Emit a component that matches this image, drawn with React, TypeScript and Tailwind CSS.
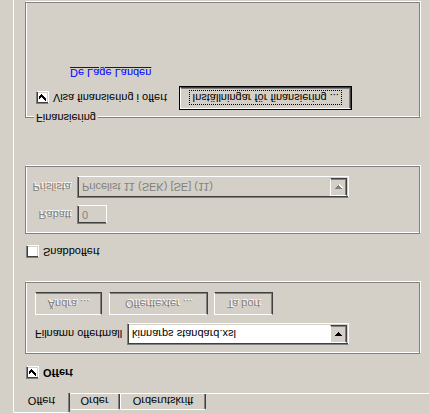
import React from "react";

const sunken =
  "border border-t-[#808080] border-l-[#808080] border-r-white border-b-white shadow-[inset_1px_1px_0_#404040,inset_-1px_-1px_0_#d4d0c8]";
const raised =
  "border border-t-white border-l-white border-r-[#404040] border-b-[#404040] shadow-[inset_-1px_-1px_0_#808080] bg-[#d4d0c8]";
const disabledText = "text-[#808080] [text-shadow:1px_1px_0_#fff]";

function Check() {
  return (
    <svg width="7" height="7" viewBox="0 0 7 7" className="block" shapeRendering="crispEdges">
      <rect x="6" y="0" width="1" height="3" fill="#000" />
      <rect x="5" y="1" width="1" height="3" fill="#000" />
      <rect x="4" y="2" width="1" height="3" fill="#000" />
      <rect x="3" y="3" width="1" height="3" fill="#000" />
      <rect x="2" y="4" width="1" height="3" fill="#000" />
      <rect x="1" y="3" width="1" height="3" fill="#000" />
      <rect x="0" y="2" width="1" height="3" fill="#000" />
    </svg>
  );
}

function CheckBox({ checked }: { checked?: boolean }) {
  return (
    <div className={`w-[13px] h-[13px] bg-white shrink-0 flex items-center justify-center ${sunken}`}>
      {checked && <Check />}
    </div>
  );
}

function Arrow({ disabled }: { disabled?: boolean }) {
  return (
    <svg width="8" height="5" viewBox="0 0 8 5" className="block" shapeRendering="crispEdges">
      {disabled && <path d="M1 1h7v1h-1v1h-1v1h-1v1h-1v-1h-1v-1h-1v-1h-1z" fill="#fff" />}
      <path d="M0 0h7v1h-1v1h-1v1h-1v1h-1v-1h-1v-1h-1v-1h-1z" fill={disabled ? "#808080" : "#000"} />
    </svg>
  );
}

function Select({ text, width, disabled }: { text: string; width: string; disabled?: boolean }) {
  return (
    <div
      className={`${width} h-[22px] flex items-center justify-between pl-[3px] pr-[1px] ${sunken} ${
        disabled ? "bg-[#d4d0c8] text-[#808080]" : "bg-white text-black"
      }`}
    >
      <span className="whitespace-nowrap pl-[1px]">{text}</span>
      <div className={`w-[17px] h-[18px] flex items-center justify-center ${raised}`}>
        <Arrow disabled={disabled} />
      </div>
    </div>
  );
}

function Button({ label, width, disabled }: { label: string; width: string; disabled?: boolean }) {
  return (
    <div className={`${width} h-[23px] flex items-center justify-center ${raised}`}>
      <span className={disabled ? disabledText : "text-black"}>{label}</span>
    </div>
  );
}

const group = "border border-[#808080] shadow-[inset_1px_1px_0_#fff,1px_1px_0_#fff]";

export default function App() {
  return (
    <div className="w-[429px] h-[414px] overflow-hidden bg-[#d4d0c8] [transform:scaleY(-1)] font-['Liberation_Sans',Arial,sans-serif] text-[11px] leading-[13px] text-black">
      {/* Tabs */}
      <div className="relative z-10 flex items-end h-[20px] pl-[13px]">
        <div className="w-[57px] h-[20px] -mb-px bg-[#d4d0c8] border-l border-t border-white border-r border-r-[#404040] shadow-[inset_-1px_0_0_#808080] rounded-t-[2px] flex justify-center pt-[5px]">
          Offert
        </div>
        <div className="w-[50px] h-[16px] border-t border-white border-r border-r-[#404040] shadow-[inset_-1px_0_0_#808080] rounded-t-[2px] flex justify-center pt-[2px]">
          Order
        </div>
        <div className="w-[86px] h-[16px] border-l border-t border-white border-r border-r-[#404040] shadow-[inset_-1px_0_0_#808080] rounded-t-[2px] flex justify-center pt-[2px]">
          Orderutskrift
        </div>
      </div>

      {/* Pane */}
      <div className="ml-[13px] h-[400px] border-l border-t border-white pl-[11px] pr-[9px] flex flex-col">
        {/* Offert checkbox */}
        <div className="mt-[14px] ml-[1px] flex items-center gap-[4px] h-[13px]">
          <CheckBox checked />
          <span className="font-bold">Offert</span>
        </div>

        {/* Group: Filnamn */}
        <div className={`mt-[12px] h-[72px] ${group} pt-[8px] pl-[9px] flex flex-col`}>
          <div className="flex items-center h-[22px]">
            <span className="w-[92px]">Filnamn offertmall</span>
            <Select text="kinnarps standard.xsl" width="w-[222px]" />
          </div>
          <div className="flex mt-[8px]">
            <Button label="Ändra ..." width="w-[67px]" disabled />
            <div className="ml-[7px]">
              <Button label="Offerttexter ..." width="w-[99px]" disabled />
            </div>
            <div className="ml-[6px]">
              <Button label="Ta bort" width="w-[59px]" disabled />
            </div>
          </div>
        </div>

        {/* Snabboffert */}
        <div className="mt-[24px] ml-[1px] flex items-center gap-[4px] h-[13px]">
          <CheckBox />
          <span>Snabboffert</span>
        </div>

        {/* Group: Prislista */}
        <div className={`mt-[11px] h-[68px] ${group} pt-[9px] flex flex-col`}>
          <div className="flex items-center h-[19px]">
            <span className={`w-[51px] pr-[6px] text-right ${disabledText}`}>Rabatt</span>
            <div className={`w-[30px] h-[19px] bg-[#d4d0c8] flex items-center pl-[4px] text-[#808080] ${sunken}`}>0</div>
          </div>
          <div className="flex items-center h-[22px] mt-[7px]">
            <span className={`w-[51px] pr-[6px] text-right ${disabledText}`}>Prislista</span>
            <Select text="Pricelist 11 (SEK) [SE] (11)" width="w-[272px]" disabled />
          </div>
        </div>

        {/* Group: Finansiering */}
        <div className={`relative mt-[48px] h-[116px] ${group} pt-[7px] pl-[10px] flex flex-col`}>
          <span className="absolute -top-[7px] left-[8px] px-[2px] bg-[#d4d0c8]">Finansiering</span>
          <div className="flex items-center h-[24px]">
            <CheckBox checked />
            <span className="ml-[4px] w-[126px]">Visa finansiering i offert</span>
            <div className="w-[173px] h-[24px] border border-black">
              <div className={`w-full h-full flex items-center justify-center ${raised}`}>
                <span className="px-[3px] outline outline-1 outline-dotted outline-black -outline-offset-1 leading-[15px]">
                  Inställningar för finansiering ...
                </span>
              </div>
            </div>
          </div>
          <div className="mt-[7px] ml-[34px]">
            <span className="text-[#0000ff] underline">De Lage Landen</span>
          </div>
        </div>
      </div>
    </div>
  );
}
